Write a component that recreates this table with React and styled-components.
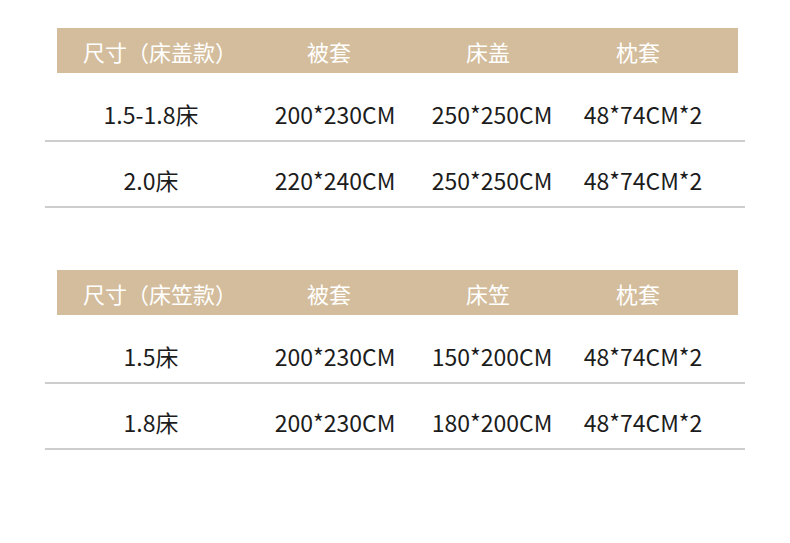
import React from 'react';
import styled, { createGlobalStyle } from 'styled-components';

const GlobalStyle = createGlobalStyle`
  body {
    margin: 0;
    background: #ffffff;
    font-family: "Noto Sans CJK SC", "Noto Sans", sans-serif;
  }
`;

const Page = styled.div`
  width: 700px;
  padding: 28px 45px 0;
  display: flex;
  flex-direction: column;
  gap: 62px;
`;

const Table = styled.section`
  display: flex;
  flex-direction: column;
`;

const HeadRow = styled.div`
  display: grid;
  grid-template-columns: 206px 132px 186px 114px 1fr;
  align-items: center;
  justify-items: center;
  height: 45px;
  margin: 0 7px 3px 12px;
  background: #d3bd9c;
  color: #ffffff;
  font-size: 22px;
  font-weight: 400;
  padding-top: 1px;
  box-sizing: border-box;
`;

const Row = styled.div`
  display: grid;
  grid-template-columns: 212px 156px 158px 144px 1fr;
  align-items: center;
  justify-items: center;
  height: 66px;
  padding-top: 13px;
  box-sizing: border-box;
  border-bottom: 2px solid #cdcdcd;
  color: #1c1c1c;
  font-size: 23px;
  font-weight: 400;
`;

const Cell = styled.span`
  white-space: nowrap;
  line-height: 1;
`;

const tables = [
  {
    head: ['尺寸（床盖款）', '被套', '床盖', '枕套'],
    rows: [
      ['1.5-1.8床', '200*230CM', '250*250CM', '48*74CM*2'],
      ['2.0床', '220*240CM', '250*250CM', '48*74CM*2'],
    ],
  },
  {
    head: ['尺寸（床笠款）', '被套', '床笠', '枕套'],
    rows: [
      ['1.5床', '200*230CM', '150*200CM', '48*74CM*2'],
      ['1.8床', '200*230CM', '180*200CM', '48*74CM*2'],
    ],
  },
];

const SizeTable = ({ head, rows }) => (
  <Table>
    <HeadRow>
      {head.map((h) => (
        <Cell key={h}>{h}</Cell>
      ))}
    </HeadRow>
    {rows.map((r, i) => (
      <Row key={i}>
        {r.map((c, j) => (
          <Cell key={j}>{c}</Cell>
        ))}
      </Row>
    ))}
  </Table>
);

const App = () => (
  <>
    <GlobalStyle />
    <Page>
      {tables.map((t, i) => (
        <SizeTable key={i} head={t.head} rows={t.rows} />
      ))}
    </Page>
  </>
);

export default App;
